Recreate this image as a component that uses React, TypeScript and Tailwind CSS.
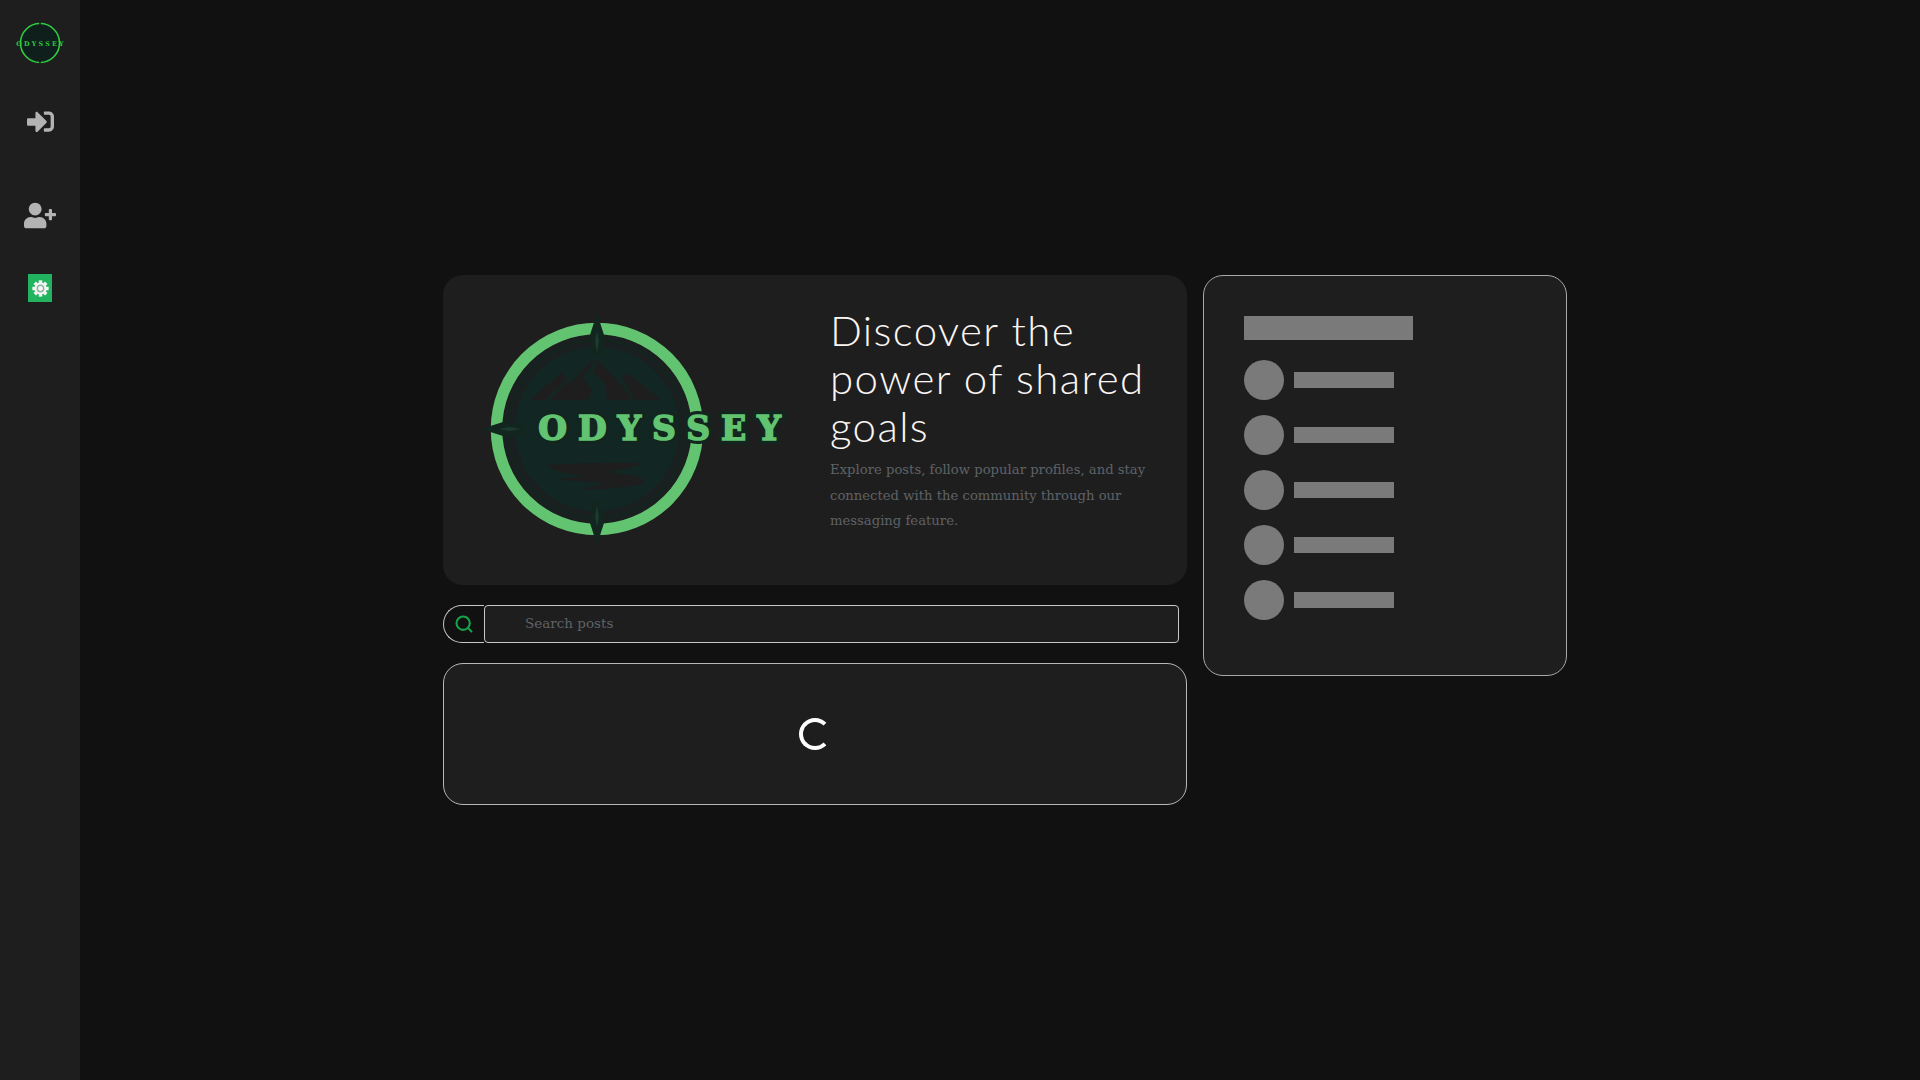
import React from 'react';
import { Search } from 'lucide-react';
import { FaSignInAlt, FaUserPlus } from 'react-icons/fa';

const Star = ({ angle }: { angle: number }) => (
  <g transform={`rotate(${angle} 154 154)`}>
    <path d="M154 38 L161 60 L159 82 L149 82 L147 60 Z" fill="#12261f" />
    <path d="M154 56 L156 66 L154 78 L152 66 Z" fill="#1d3a30" />
  </g>
);

const logoLetters = {
  x: 222,
  y: 165,
  textAnchor: 'middle' as const,
  fontFamily: "'DejaVu Serif', serif",
  fontWeight: 700,
  fontSize: 33,
  letterSpacing: 11,
};

const HeroLogo = () => (
  <svg viewBox="0 0 387 310" className="w-[387px] h-[310px] shrink-0">
    <circle cx="154" cy="154" r="94" fill="#1a2020" />
    <circle cx="154" cy="154" r="100.5" fill="none" stroke="#62c370" strokeWidth="11.5" />
    <circle cx="154" cy="154" r="89" fill="none" stroke="#12261f" strokeWidth="1.5" />
    <circle cx="154" cy="154" r="82" fill="#122723" />
    <path d="M87 125 L119 97 L125 103 L102 125 Z" fill="#1e1e1e" />
    <path d="M107 125 L124 107 L129 107 L149 85 L151 87 L140 102 L149 115 L145 125 Z" fill="#1e1e1e" />
    <path d="M164 125 L162 108 L150 98 L154 85 L177 108 L189 125 Z" fill="#1e1e1e" />
    <path d="M192 125 L187 117 L179 103 L184 98 L219 125 Z" fill="#1e1e1e" />
    <path d="M102 190 Q150 187 200 188 Q190 194 160 197 L190 200 Q205 205 200 209 Q180 213 140 215 Q150 210 165 208 L113 205 Q125 202 140 201 Q115 198 102 190 Z" fill="#1e1e1e" />
    <Star angle={0} />
    <Star angle={180} />
    <Star angle={270} />
    <text {...logoLetters} fill="#12261f" stroke="#12261f" strokeWidth="8">
      ODYSSEY
    </text>
    <text {...logoLetters} fill="#62c370" stroke="#62c370" strokeWidth="1.6">
      ODYSSEY
    </text>
  </svg>
);

const SideLogo = () => (
  <svg viewBox="0 0 54 44" className="w-[54px] h-11">
    <circle cx="27" cy="22" r="19.5" fill="#0f1f1c" stroke="#2ecc40" strokeWidth="1.6" />
    <path d="M27 0 L28.6 5 L25.4 5 Z M27 44 L28.6 39 L25.4 39 Z" fill="#1e1e1e" />
    <text
      x="28"
      y="24.5"
      textAnchor="middle"
      fontFamily="'DejaVu Serif', serif"
      fontWeight="700"
      fontSize="6.4"
      letterSpacing="2.2"
      fill="#2ecc40"
    >
      ODYSSEY
    </text>
  </svg>
);

// gear in the settings button has a ringed hub, FaCog only has a hole
const GearIcon = () => (
  <svg viewBox="0 0 24 24" className="w-[17px] h-[17px]">
    {[0, 45, 90, 135].map((a) => (
      <rect key={a} x="9.5" y="0.5" width="5" height="23" fill="#f4f4f4" transform={`rotate(${a} 12 12)`} />
    ))}
    <circle cx="12" cy="12" r="8.5" fill="#f4f4f4" />
    <circle cx="12" cy="12" r="4.5" fill="#f4f4f4" stroke="#8fb59c" strokeWidth="2" />
  </svg>
);

const PeopleRow = () => (
  <div className="flex items-center gap-2.5">
    <div className="w-10 h-10 rounded-full bg-[#7a7a7a]" />
    <div className="w-[100px] h-4 bg-[#7a7a7a]" />
  </div>
);

export default function App() {
  return (
    <div className="flex min-h-screen bg-[#111111] font-['DejaVu_Serif',serif]">
      <aside className="w-20 shrink-0 bg-[#1e1e1e] flex flex-col items-center pt-[21px]">
        <SideLogo />
        <FaSignInAlt className="mt-[43px] w-[27px] h-[27px] text-[#b3b3b3]" />
        <FaUserPlus className="mt-[67px] w-[32px] h-[27px] text-[#b3b3b3]" />
        <div className="mt-[45px] w-6 h-7 bg-[#22b35e] flex items-center justify-center">
          <GearIcon />
        </div>
      </aside>

      <main className="flex items-start gap-4 pl-[363px] pt-[275px]">
        <div className="w-[744px] flex flex-col">
          <section className="h-[310px] rounded-[20px] bg-[#1e1e1e] flex items-center">
            <HeroLogo />
            <div className="w-[330px] pb-5">
              <h1 className="font-['Lato',sans-serif] font-light text-[42px] leading-[48px] text-[#fbf6f4] tracking-[1.4px]">
                Discover the power of shared goals
              </h1>
              <p className="mt-[7px] text-[13.2px] leading-[25.5px] text-[#5f6267] font-light">
                Explore posts, follow popular profiles, and stay connected with the community through our messaging feature.
              </p>
            </div>
          </section>

          <div className="mt-5 flex h-[38px]">
            <div className="w-[41px] rounded-l-full border border-[#c8c8c8] border-r-0 flex items-center justify-center">
              <Search className="w-5 h-5 text-[#16a34a]" strokeWidth={2.5} />
            </div>
            <input
              placeholder="Search posts"
              className="w-[695px] rounded-sm border border-[#c8c8c8] bg-[#1e1e1e] pl-10 pb-0.5 text-[13.5px] text-white placeholder:text-[#5f6267] outline-none"
            />
          </div>

          <section className="mt-5 h-[142px] rounded-[20px] border border-[#b8b8b8] bg-[#1e1e1e] flex items-center justify-center">
            <div className="w-8 h-8 rounded-full border-4 border-white border-r-transparent" />
          </section>
        </div>

        <aside className="w-[364px] h-[401px] rounded-[20px] border border-[#a8a8a8] bg-[#1e1e1e] p-10">
          <div className="w-[169px] h-6 bg-[#7a7a7a]" />
          <div className="mt-5 flex flex-col gap-[15px]">
            {[0, 1, 2, 3, 4].map((i) => (
              <PeopleRow key={i} />
            ))}
          </div>
        </aside>
      </main>
    </div>
  );
}
